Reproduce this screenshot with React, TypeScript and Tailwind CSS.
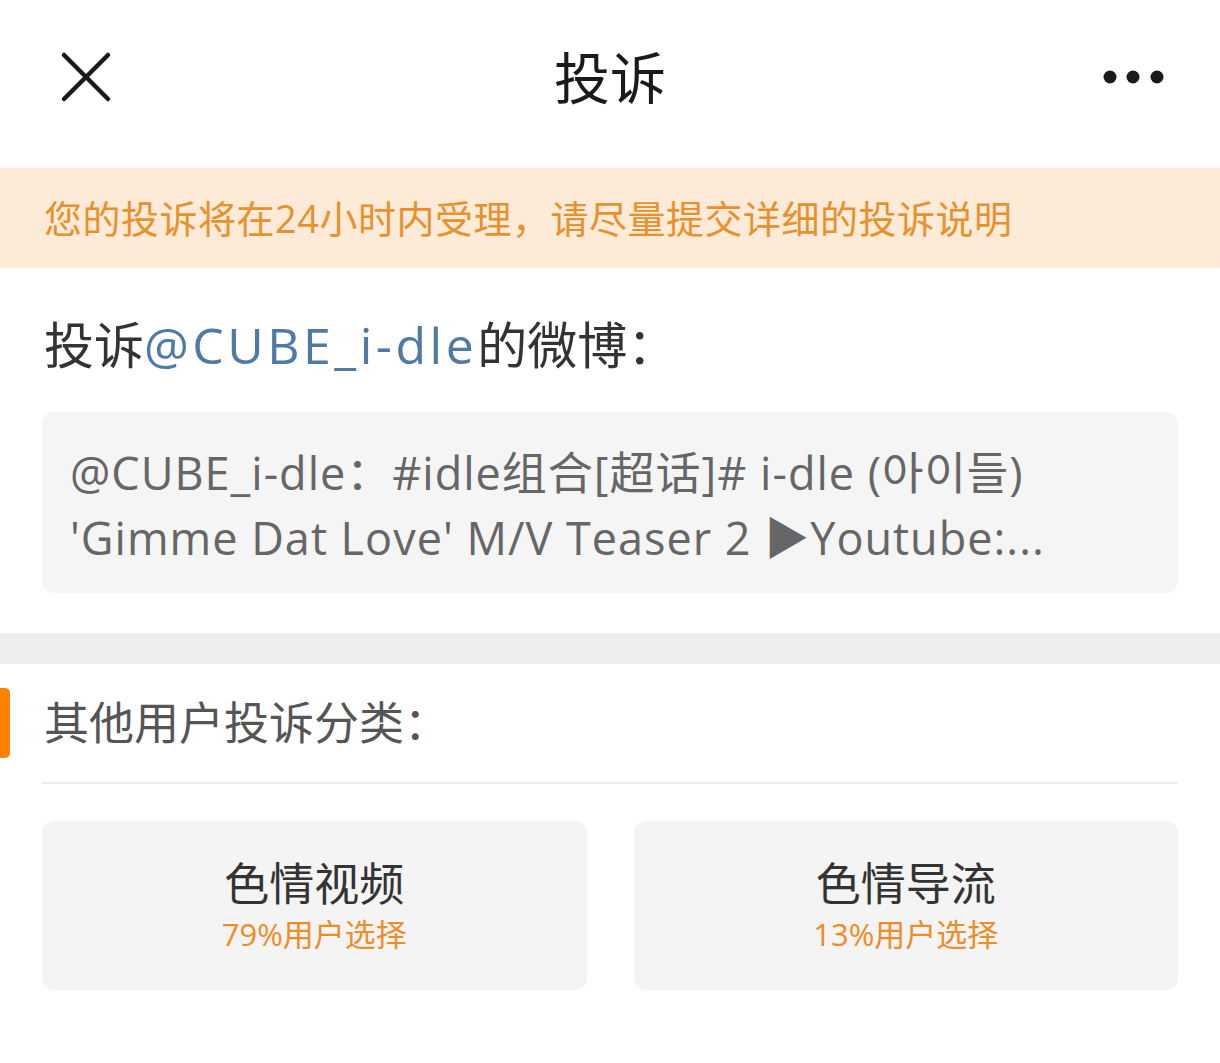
const font = { fontFamily: '"Open Sans", "Noto Sans CJK SC", "Noto Sans CJK KR", sans-serif' };

type Category = {
  name: string;
  percent: number;
};

const categories: Category[] = [
  { name: '色情视频', percent: 79 },
  { name: '色情导流', percent: 13 },
];

function CloseIcon() {
  return (
    <svg width="52" height="52" viewBox="0 0 52 52" fill="none">
      <path d="M4 4L48 48M48 4L4 48" stroke="#1a1a1a" strokeWidth="4.5" strokeLinecap="round" />
    </svg>
  );
}

function MoreIcon() {
  return (
    <svg width="64" height="16" viewBox="0 0 64 16">
      <circle cx="8" cy="8" r="6.5" fill="#1a1a1a" />
      <circle cx="31" cy="8" r="6.5" fill="#1a1a1a" />
      <circle cx="55" cy="8" r="6.5" fill="#1a1a1a" />
    </svg>
  );
}

function CategoryCard({ name, percent }: Category) {
  return (
    <div className="flex h-[169px] flex-1 flex-col items-center justify-center rounded-[12px] bg-[#f4f4f4]">
      <div className="text-[45px] leading-[56px] text-[#333333]">{name}</div>
      <div className="text-[31px] leading-[44px] text-[#ee8c25]">{percent}%用户选择</div>
    </div>
  );
}

export default function App() {
  return (
    <div className="min-h-[1063px] w-full bg-white" style={font}>
      {/* top bar */}
      <div className="relative flex h-[168px] items-center justify-between pb-[14px] pl-[60px] pr-[54px]">
        <CloseIcon />
        <div className="absolute left-1/2 top-[42px] -translate-x-1/2 text-[56px] leading-[70px] text-[#1a1a1a]">投诉</div>
        <MoreIcon />
      </div>

      <div className="flex h-[100px] items-center bg-[#fdebd8] px-[44px] text-[38px] tracking-[0.5px] text-[#e8912c]">
        您的投诉将在24小时内受理，请尽量提交详细的投诉说明
      </div>

      <div className="px-[44px] pt-[47px] text-[50px] leading-[60px] text-[#333333]">
        投诉<span className="tracking-[3.5px] text-[#4f79a6]">@CUBE_i-dle</span>的微博：
      </div>

      <div className="mx-[42px] mt-[37px] rounded-[12px] bg-[#f5f5f5] pl-[28px] pr-[40px] pt-[28px] pb-[23px] text-[45px] leading-[65px] tracking-[1px] text-[#666666]">
        <div className="truncate">@CUBE_i-dle：#idle组合[超话]# i-dle (아이들)</div>
        <div className="truncate">'Gimme Dat Love' M/V Teaser 2 ▶Youtube:...</div>
      </div>

      <div className="mt-[40px] h-[31px] bg-[#eeeeee]" />

      <div className="mt-[24px] flex h-[70px] items-center">
        <div className="h-full w-[10px] rounded-r-[5px] bg-[#ff8200]" />
        <div className="pl-[34px] text-[45px] text-[#555555]">其他用户投诉分类：</div>
      </div>

      <div className="mx-[42px] mt-[24px] h-[2px] bg-[#ececec]" />

      <div className="mx-[42px] mt-[37px] flex gap-[47px]">
        {categories.map((c) => (
          <CategoryCard key={c.name} {...c} />
        ))}
      </div>
    </div>
  );
}
